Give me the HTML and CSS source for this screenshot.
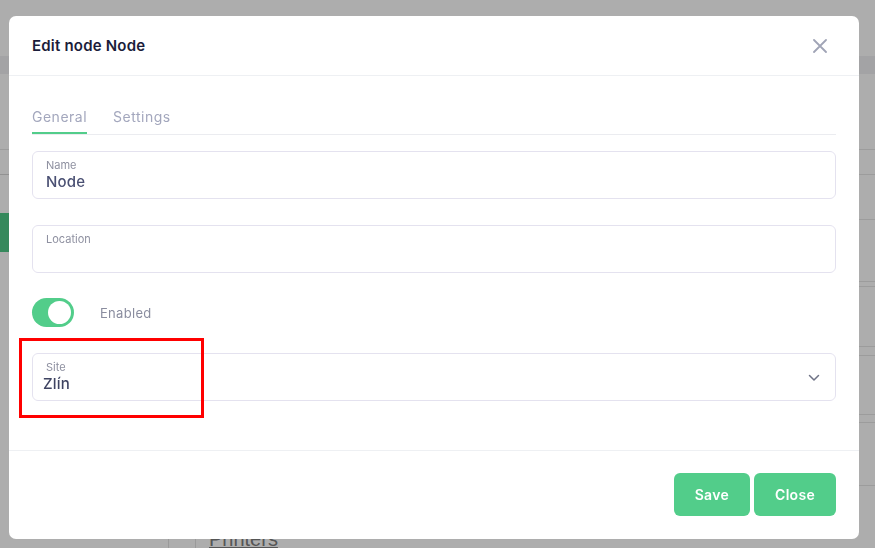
FILE: index.html
```html
<!DOCTYPE html>
<html lang="en">
<head>
<meta charset="utf-8">
<title>Edit node Node</title>
<link rel="stylesheet" href="styles.css">
</head>
<body>
  <div class="app">
    <div class="band"></div>
    <div class="main">
      <div class="sidebar">
        <div class="side-row side-a"></div>
        <div class="side-row side-b"></div>
        <div class="side-item active"></div>
      </div>
      <div class="content">
        <div class="row h76"></div>
        <div class="row h24"></div>
        <div class="row h44"></div>
        <div class="row h61"></div>
        <div class="row h4"></div>
        <div class="row h59"></div>
        <div class="row h8"></div>
        <div class="row h58"></div>
        <div class="row h7"></div>
        <div class="row h62"></div>
        <div class="printers"><span class="col-line"></span><a href="#">Printers</a></div>
      </div>
    </div>
  </div>

  <div class="overlay">
    <div class="modal">
      <div class="modal-header">
        <h2>Edit node Node</h2>
        <button class="close-x" aria-label="Close">
          <svg width="14" height="14" viewBox="0 0 14 14"><path d="M1 1L13 13M13 1L1 13" stroke="#a0a4b6" stroke-width="1.8" stroke-linecap="round"/></svg>
        </button>
      </div>
      <div class="modal-body">
        <div class="tabs">
          <span class="tab active">General</span>
          <span class="tab">Settings</span>
        </div>
        <div class="field first">
          <label>Name</label>
          <div class="value">Node</div>
        </div>
        <div class="field">
          <label>Location</label>
          <div class="value"></div>
        </div>
        <div class="toggle-row">
          <span class="toggle"><span class="knob"></span></span>
          <span class="toggle-label">Enabled</span>
        </div>
        <div class="field select">
          <label>Site</label>
          <div class="value">Zlín</div>
          <svg class="chevron" width="12" height="8" viewBox="0 0 12 8"><path d="M1.5 1.5L6 6L10.5 1.5" fill="none" stroke="#6f7386" stroke-width="1.5" stroke-linecap="round" stroke-linejoin="round"/></svg>
          <span class="mark"></span>
        </div>
      </div>
      <div class="modal-footer">
        <button class="btn">Save</button>
        <button class="btn">Close</button>
      </div>
    </div>
  </div>
</body>
</html>
```
FILE: styles.css
```css
body { margin:0; background:#fff; overflow:hidden; font-family:Inter, "Noto Sans", sans-serif; }

/* page behind the dialog */
.app { display:flex; flex-direction:column; height:548px; padding-top:56px; box-sizing:border-box; overflow:hidden; }
.band { height:18px; flex-shrink:0; background:#f0f1f4; }
.main { display:flex; flex:1; min-height:0; overflow:hidden; }
.sidebar { width:168px; border-right:1px solid #e4e4e4; }
.side-row { border-bottom:1px solid #e6e6e6; }
.side-a { height:75px; }
.side-b { height:24px; border-bottom-color:#d8d8d8; margin-bottom:38px; }
.side-item { height:39px; }
.side-item.active { background:#4fcb88; }
.content { flex:1; }
.row { border-bottom:1px solid #e6e6e6; }
.h76 { height:75px; } .h24 { height:24px; } .h44 { height:44px; } .h61 { height:61px; }
.h4 { height:4px; } .h59 { height:59px; } .h8 { height:8px; } .h58 { height:58px; }
.h7 { height:7px; } .h62 { height:62px; }
.printers { display:flex; align-items:flex-end; height:64px; padding-left:26px; gap:13px; }
.col-line { width:1px; height:30px; background:#e4e4e4; }
.printers a { color:#7e7e7e; font:20px "Liberation Sans", Arial, sans-serif; text-decoration:underline; line-height:22px; }

/* dialog */
.overlay {
  position:fixed; inset:0; background:rgba(0,0,0,.32);
  display:flex; align-items:flex-start; padding:16px 0 0 9px;
}
.modal { width:850px; height:523px; background:#fff; border-radius:7px; display:flex; flex-direction:column; }
.modal-header {
  height:60px; box-sizing:border-box; border-bottom:1px solid #eef0f3;
  display:flex; align-items:center; justify-content:space-between; padding:0 32px 0 23px;
}
.modal-header h2 { margin:0; font-size:15px; font-weight:600; color:#1b1d3a; letter-spacing:0.2px; }
.close-x { border:0; background:none; padding:0; width:14px; height:14px; display:flex; cursor:pointer; }
.modal-body { flex:1; padding:24px 23px 0; }
.tabs { display:flex; gap:26px; border-bottom:1px solid #ebecf0; height:34px; }
.tab { font-size:14px; color:#a3a7bd; line-height:18px; padding-top:8px; box-sizing:border-box; letter-spacing:0.5px; }
.tab.active { border-bottom:2px solid #52cd8a; }
.field {
  position:relative; margin-top:26px; height:48px; box-sizing:border-box;
  border:1px solid #e4e2ef; border-radius:6px; padding:6px 13px 0;
}
.field.first { margin-top:16px; }
.field label { display:block; font-size:11px; line-height:14px; color:#8e90a0; }
.field .value { font-size:15px; font-weight:500; line-height:20px; color:#4a5073; letter-spacing:0.2px; }
.toggle-row { display:flex; align-items:center; gap:26px; margin-top:25px; height:29px; }
.toggle { width:42px; height:29px; border-radius:15px; background:#52cd8a; display:flex; align-items:center; justify-content:flex-end; padding:0 3px; box-sizing:border-box; }
.knob { width:23px; height:23px; border-radius:50%; background:#fff; }
.toggle-label { font-size:13px; color:#8a8d9f; letter-spacing:0.3px; }
.field.select .value { margin-left:-3px; color:#3f4462; }
.chevron { position:absolute; right:15px; top:20px; }
.mark { position:absolute; left:-14px; top:-16px; width:179px; height:74px; border:3px solid #ff0000; }
.modal-footer {
  height:89px; box-sizing:border-box; border-top:1px solid #eef0f3;
  display:flex; justify-content:flex-end; align-items:center; gap:4px; padding:0 23px 1px;
}
.btn {
  height:43px; border:0; border-radius:6px; background:#52cd8a; color:#fff;
  font-family:inherit; font-size:14px; font-weight:600; padding:0 21px; letter-spacing:0.3px; cursor:pointer;
}
```
